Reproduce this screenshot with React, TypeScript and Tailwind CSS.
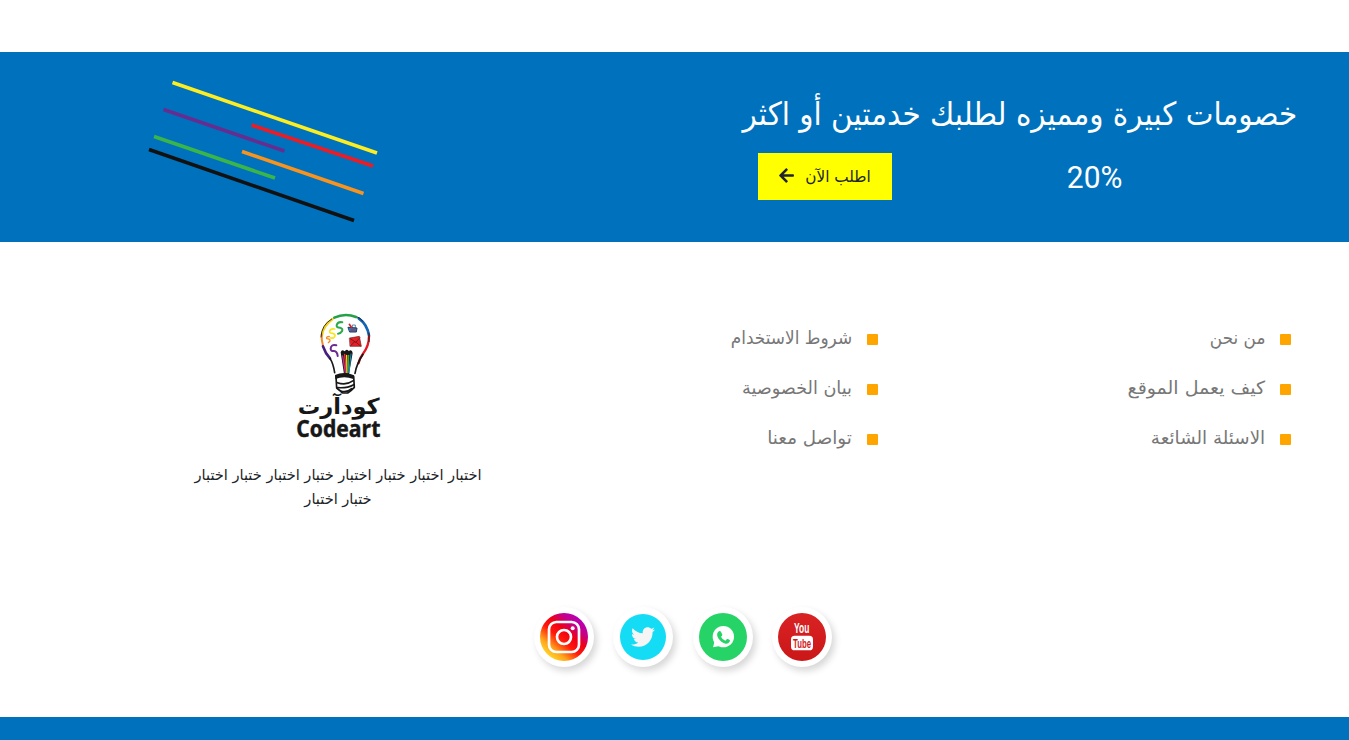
import React from "react";
import { FaArrowLeft, FaTwitter } from "react-icons/fa";

const stripes = [
  { d: "M42.5 22.5 247 93", c: "#fdee21" },
  { d: "M33.5 49.5 154.500 91", c: "#662d91" },
  { d: "M121.500 65 243 106", c: "#ed1c24" },
  { d: "M24 76.500 145 118", c: "#39b54a" },
  { d: "M112 91.500 233.500 133.500", c: "#f7931e" },
  { d: "M19 89.500 224 160.500", c: "#111111" },
];

const about = [
  { label: "من نحن", cls: "scale-x-[1.04]" },
  { label: "كيف يعمل الموقع", cls: "scale-x-[1.175]" },
  { label: "الاسئلة الشائعة", cls: "scale-x-[1.13]" },
];
const terms = [
  { label: "شروط الاستخدام", cls: "scale-x-[1.045]" },
  { label: "بيان الخصوصية", cls: "scale-x-[1.09]" },
  { label: "تواصل معنا", cls: "scale-x-[1.13]" },
];

function Stripes() {
  return (
    <svg width="270" height="180" viewBox="0 0 270 180" fill="none" strokeWidth="3.6">
      {stripes.map((s) => (
        <path key={s.c} d={s.d} stroke={s.c} />
      ))}
    </svg>
  );
}

function Logo() {
  return (
    <svg className="ml-[4px]" width="120" height="140" viewBox="0 0 360 420" fill="none" strokeLinecap="round" strokeLinejoin="round">
      <path d="M126 90Q130 62 158 42" stroke="#f4d21a" strokeWidth="7" />
      <path d="M163 38Q195 23 228 36" stroke="#24a148" strokeWidth="8" />
      <path d="M236 40Q262 58 267 92" stroke="#1265b5" strokeWidth="8" />
      <path d="M267 94Q267 124 249 146Q239 159 236 174" stroke="#e11822" strokeWidth="7" />
      <path d="M125 88Q124 104 129 122" stroke="#f58a1f" strokeWidth="6" />
      <path d="M129 124Q136 145 150 160" stroke="#47207f" strokeWidth="8" />
      <path d="M150 160Q160 176 164 203M249 148Q230 176 225 205" stroke="#171717" strokeWidth="5" />
      <path d="M123 96Q124 60 155 42M232 36Q240 38 248 48M267 84V110M240 162 234 178" stroke="#171717" strokeWidth="2.500" />
      <path d="M187 52Q173 49 170 61Q169 68 180 68Q190 70 186 79Q182 86 174 86" stroke="#2aab4a" strokeWidth="6" />
      <path d="M164 72Q151 70 149 79Q148 85 158 85Q168 88 164 95Q159 102 151 98" stroke="#f5e61c" strokeWidth="5" />
      <path d="M148 94Q138 94 140 101Q151 101 150 108L145 113" stroke="#f58a1f" strokeWidth="4" />
      <path d="M169 121Q153 117 152 131Q152 139 162 138Q172 139 173 153" stroke="#6b2b91" strokeWidth="6" />
      <path d="M205 67 231 69 229 81 210 81Z" fill="#1684c9" stroke="#173c67" strokeWidth="3" />
      <path d="M208 58 214 67M213 75H225" stroke="#d3272d" strokeWidth="5" />
      <path d="M217 66V60H226V68" stroke="#244a73" strokeWidth="2" />
      <path d="M209 99 238 94 244 124 211 124Z" fill="#e42127" stroke="#711c20" strokeWidth="2" />
      <path d="M211 101 227 112 240 98M212 122 224 110M229 112 241 123" stroke="#4a171b" strokeWidth="2" />
      <path d="M182 142Q185 132 194 139Q200 130 206 138Q216 131 218 144L207 207H192Z" fill="#171717" />
      <path d="M188 153 196 203" stroke="#c72c8e" strokeWidth="4" />
      <path d="M194 148 199 203" stroke="#ef3b27" strokeWidth="4" />
      <path d="M200 151 201 203" stroke="#f6df24" strokeWidth="4" />
      <path d="M206 151 204 203" stroke="#36a64a" strokeWidth="4" />
      <path d="M213 147 207 203" stroke="#158bc6" strokeWidth="3" />
      <path d="M165 210Q193 198 222 211L220 222Q193 211 166 222Z" fill="#171717" />
      <path d="M168 215 170 249Q184 260 188 264H203Q216 255 223 247L221 214" stroke="#171717" strokeWidth="5" />
      <path d="M172 233Q199 242 220 227M173 248Q202 250 221 239M184 259Q202 263 215 251" stroke="#171717" strokeWidth="5" />
      <text x="176" y="328" textAnchor="middle" direction="rtl" textLength="246" lengthAdjust="spacingAndGlyphs" fontFamily="DejaVu Sans, sans-serif" fontWeight="700" fontSize="66" fill="#171717">كودآرت</text>
      <text x="175" y="397" textAnchor="middle" textLength="252" lengthAdjust="spacingAndGlyphs" fontFamily="Open Sans, sans-serif" fontWeight="700" fontSize="69" fill="#171717" stroke="#171717" strokeWidth="1.5">Codeart</text>
    </svg>
  );
}

function Instagram() {
  return (
    <svg width="48" height="48" viewBox="0 0 144 144" fill="none">
      <defs>
        <linearGradient id="ig" x1="24" y1="128" x2="120" y2="16" gradientUnits="userSpaceOnUse">
          <stop offset="0" stopColor="#ffd52b" />
          <stop offset=".18" stopColor="#ffa51c" />
          <stop offset=".42" stopColor="#ff1a0a" />
          <stop offset=".62" stopColor="#f00015" />
          <stop offset=".82" stopColor="#c4008c" />
          <stop offset="1" stopColor="#b800b8" />
        </linearGradient>
      </defs>
      <circle cx="72" cy="72" r="72" fill="url(#ig)" />
      <rect x="27" y="27" width="90" height="90" rx="22" stroke="#fff" strokeWidth="8" />
      <circle cx="72" cy="72" r="21" stroke="#fff" strokeWidth="8" />
      <circle cx="98" cy="46" r="6" fill="#fff" />
    </svg>
  );
}

function WhatsApp() {
  return (
    <svg width="48" height="48" viewBox="0 0 144 144">
      <circle cx="72" cy="72" r="72" fill="#25d366" />
      <circle cx="73" cy="71" r="32" fill="#fff" />
      <path d="M42 103 47 84 62 99Z" fill="#fff" />
      <path d="M58 56Q62 52 66 56L70 65Q70 68 66 71Q70 80 79 83L84 78Q87 77 92 81Q94 82 92 86Q88 93 80 92Q63 88 56 72Q52 62 58 56Z" fill="#25d366" />
    </svg>
  );
}

function YouTube() {
  return (
    <svg width="48" height="48" viewBox="0 0 144 144">
      <defs>
        <linearGradient id="yt" x1="0" y1="0" x2="0" y2="1">
          <stop offset="0" stopColor="#d92223" />
          <stop offset="1" stopColor="#cb1718" />
        </linearGradient>
      </defs>
      <circle cx="72" cy="72" r="72" fill="url(#yt)" />
      <text transform="translate(48 61) scale(1 1.2)" textLength="46" lengthAdjust="spacingAndGlyphs" fontFamily="Liberation Sans, sans-serif" fontWeight="700" fontSize="36" fill="#fff">You</text>
      <rect x="39" y="68" width="66" height="44" rx="11" fill="#fff" />
      <text transform="translate(45 105) scale(1 1.2)" textLength="54" lengthAdjust="spacingAndGlyphs" fontFamily="Liberation Sans, sans-serif" fontWeight="700" fontSize="34" fill="#cf1b1c">Tube</text>
    </svg>
  );
}

function Social({ children }: { children: React.ReactNode }) {
  return (
    <a className="flex size-[60px] items-center justify-center rounded-full bg-white shadow-[3px_4px_7px_rgba(0,0,0,0.16)]">
      {children}
    </a>
  );
}

function Links({ items }: { items: { label: string; cls: string }[] }) {
  return (
    <ul className="flex flex-col">
      {items.map((it) => (
        <li key={it.label} className="flex h-[50px] items-center gap-[15px]">
          <span className="mt-[3px] size-[11px] shrink-0 rounded-[1px] bg-[#ffa500]" />
          <a className={`mb-[2px] origin-right whitespace-nowrap text-[18px] text-[#777] ${it.cls}`}>{it.label}</a>
        </li>
      ))}
    </ul>
  );
}

export default function App() {
  return (
    <div dir="rtl" className="flex h-[740px] w-full flex-col overflow-hidden bg-white pt-[52px] font-['DejaVu_Sans_Condensed','DejaVu_Sans',sans-serif] text-[#212529]">
      <section className="flex h-[190px] shrink-0 justify-between bg-[#0071bd]">
        <div className="flex w-[600px] flex-col pr-[52px] pt-[38px] text-white">
          <h2 className="h-[48px] origin-right scale-x-[1.023] self-start whitespace-nowrap text-[32px] leading-[48px]">خصومات كبيرة ومميزه لطلبك خدمتين أو اكثر</h2>
          <div className="mt-[15px] flex h-[47px] items-center justify-between pl-[9px] pr-[175px]">
            <span className="origin-right scale-x-[0.935] font-[Roboto,sans-serif] text-[32px]" dir="ltr">20%</span>
            <button className="flex h-[47px] w-[134px] items-center justify-between bg-[#ffff00] pl-[20px] pr-[21px] text-base text-[#212529]">
              <span className="origin-right scale-x-[1.06] whitespace-nowrap">اطلب الآن</span>
              <FaArrowLeft className="mb-[2px]" size={17} />
            </button>
          </div>
        </div>
        <div className="flex pl-[130px] pt-[8px]">
          <Stripes />
        </div>
      </section>
      <footer className="flex h-[475px] shrink-0 flex-col">
        <div className="flex h-[363px] pr-[58px]">
          <div className="w-[413px] pt-[71px]"><Links items={about} /></div>
          <div className="w-[340px] pt-[71px]"><Links items={terms} /></div>
          <div className="flex w-[400px] flex-col items-center pt-[63px]">
            <Logo />
            <p className="mt-[18px] w-[320px] text-center text-[15px] leading-6">
              <span className="-mx-4 block scale-x-[1.08] whitespace-nowrap">اختبار اختبار ختبار اختبار ختبار اختبار ختبار اختبار</span>
              <span className="block scale-x-[1.08] whitespace-nowrap">ختبار اختبار</span>
            </p>
          </div>
        </div>
        <div dir="ltr" className="flex gap-[19.3px] pl-[534px] pt-[2px]">
          <Social><Instagram /></Social>
          <Social>
            <span className="flex size-[46px] items-center justify-center rounded-full bg-[#14dcf5] text-[#f5f5f5]"><FaTwitter size={24} /></span>
          </Social>
          <Social><WhatsApp /></Social>
          <Social><YouTube /></Social>
        </div>
      </footer>
      <div className="h-[23px] shrink-0 bg-[#0071bd]" />
    </div>
  );
}
